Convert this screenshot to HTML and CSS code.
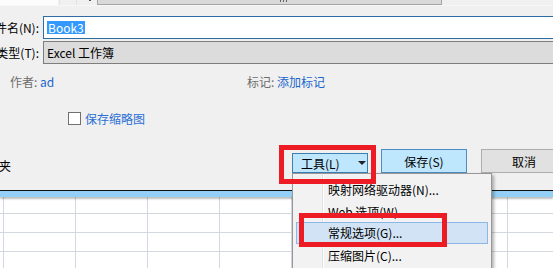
FILE: index.html
```html
<!DOCTYPE html>
<html lang="zh-CN">
<head>
  <meta charset="UTF-8" />
  <title>另存为</title>
  <link rel="stylesheet" href="styles.css">
</head>
<body>
  <div class="dialog">
    <div class="strip">
      <div class="strip-white"></div>
      <div class="strip-btn"></div>
      <div class="strip-btn strip-arrow"><span></span></div>
      <div class="hscroll"><span class="grip"></span></div>
    </div>

    <div class="form">
      <div class="field">
        <span class="label"><span>文件名(N):</span></span>
        <div class="input focused"><span class="selected">Book3</span></div>
      </div>
      <div class="field">
        <span class="label"><span>保存类型(T):</span></span>
        <div class="input combo">Excel 工作簿</div>
      </div>
    </div>

    <div class="meta">
      <div class="meta-item meta-author"><span class="meta-label">作者:</span> <span class="meta-value">ad</span></div>
      <div class="meta-item"><span class="meta-label">标记:</span> <span class="meta-value">添加标记</span></div>
    </div>

    <label class="thumb">
      <span class="checkbox"></span>
      <span class="thumb-text">保存缩略图</span>
    </label>

    <div class="actions">
      <span class="folder"><span>隐藏文件夹</span></span>
      <div class="spacer"></div>
      <button class="btn tools">工具(L)<span class="caret"></span></button>
      <button class="btn save">保存(S)</button>
      <button class="btn cancel">取消</button>
    </div>
  </div>

  <div class="band"></div>
  <div class="sheet"></div>

  <div class="menu">
    <div class="menu-item">映射网络驱动器(N)...</div>
    <div class="menu-item">Web 选项(W)...</div>
    <div class="menu-item active">常规选项(G)...</div>
    <div class="menu-item">压缩图片(C)...</div>
  </div>

  <div class="mark mark-tools"></div>
  <div class="mark mark-option"></div>
</body>
</html>
```

FILE: styles.css
```css
html, body {
  margin: 0;
  padding: 0;
  overflow: hidden;
}

body {
  width: 553px;
  height: 268px;
  position: relative;
  font-family: "Noto Sans CJK SC", "Microsoft YaHei", sans-serif;
  font-size: 12px;
  color: #000;
  background-color: #fff;
}

.dialog {
  width: 580px;
  background-color: #f0f0f0;
  padding-bottom: 17px;
}

/* top strip: the remains of the file list */
.strip {
  display: flex;
  height: 5px;
  border-bottom: 1px solid #f7f7f7;
}

.strip-white {
  width: 58px;
  background-color: #fcfcfc;
}

.strip-btn {
  width: 15px;
  margin-left: 1px;
  background-color: #f0f0f0;
  border-left: 1px solid #e3e3e3;
  position: relative;
}

.strip-arrow span {
  position: absolute;
  left: 12px;
  top: 0;
  width: 2px;
  height: 1px;
  background-color: #555;
}

.hscroll {
  width: 343px;
  margin-left: 5px;
  background-color: #d9d9d9;
  border: 1px solid #a6a6a6;
  border-top: none;
  position: relative;
}

.grip {
  position: absolute;
  left: 182px;
  top: 0;
  width: 7px;
  height: 2px;
  background-image: linear-gradient(to right, #606060 1px, transparent 1px);
  background-size: 3px 2px;
}

.form {
  padding-top: 10px;
  display: flex;
  flex-direction: column;
  gap: 2px;
}

.field {
  display: flex;
  align-items: center;
}

.label {
  width: 39px;
  display: flex;
  justify-content: flex-end;
  overflow: hidden;
  white-space: nowrap;
  margin-right: 4px;
}

.input {
  flex: 1;
  height: 21px;
  box-sizing: content-box;
  display: flex;
  align-items: center;
  padding-left: 3px;
}

.input.focused {
  background-color: #fff;
  border: 1px solid #2e6da4;
}

.selected {
  background-color: #3399ff;
  color: #fff;
  padding: 0 1px;
  line-height: 13px;
}

.input.combo {
  background-color: #dcdcdc;
  border: 1px solid #7e7e7e;
}

.meta {
  display: flex;
  margin-top: 8px;
  padding-left: 10px;
  height: 18px;
  align-items: center;
}

.meta-author {
  width: 237px;
}

.meta-label {
  color: #6d6d6d;
}

.meta-value {
  color: #1a66cc;
}

.thumb {
  display: flex;
  align-items: center;
  gap: 4px;
  margin-top: 19px;
  padding-left: 68px;
  height: 18px;
}

.checkbox {
  width: 11px;
  height: 11px;
  border: 1px solid #707070;
  background-color: #fff;
}

.thumb-text {
  color: #2a6fd4;
}

.actions {
  display: flex;
  align-items: flex-end;
  margin-top: 22px;
  padding-right: 13px;
}

.folder {
  width: 11px;
  display: flex;
  justify-content: flex-end;
  overflow: hidden;
  white-space: nowrap;
  line-height: 14px;
}

.spacer {
  flex: 1;
}

.btn {
  font-family: inherit;
  font-size: 12px;
  color: #000;
  padding: 0;
  height: 24px;
  width: 86px;
  margin-left: 14px;
  border: 1px solid #adadad;
  background-color: #e1e1e1;
}

.btn.tools {
  width: 76px;
  height: 20px;
  margin-left: 0;
  border-color: #3c7fb1;
  background-color: #bee6fd;
  display: flex;
  align-items: center;
  padding-left: 8px;
}

.caret {
  width: 0;
  height: 0;
  margin-left: 18px;
  border-left: 4px solid transparent;
  border-right: 4px solid transparent;
  border-top: 4px solid #222;
}

.btn.save {
  margin-left: 13px;
  border-color: #4f8cc1;
  background-color: #bee6fd;
}

.band {
  height: 6px;
  border-top: 1px solid #111;
  background-color: #93cff7;
  box-shadow: 0 2px 2px rgba(0, 0, 0, 0.25);
  position: relative;
}

.sheet {
  height: 71px;
  background-color: #fff;
  background-image:
    linear-gradient(to right, #d3d8e0 1px, transparent 1px),
    linear-gradient(to bottom, #d3d8e0 1px, transparent 1px);
  background-size: 72px 19px;
  background-position: 3px 16px;
}

/* dropdown of the tools button */
.menu {
  position: absolute;
  left: 292px;
  top: 173px;
  width: 192px;
  height: 90px;
  padding: 4px 3px 0;
  border: 1px solid #979797;
  border-bottom: none;
  background-color: #f2f2f2;
  background-image: linear-gradient(to right, transparent 29px, #e2e2e2 29px, #e2e2e2 30px, #fff 30px, #fff 31px, transparent 31px);
  box-shadow: 2px 2px 3px rgba(0, 0, 0, 0.3);
}

.menu-item {
  height: 22px;
  line-height: 22px;
  padding-left: 31px;
  box-sizing: border-box;
  border: 1px solid transparent;
}

.menu-item.active {
  background-color: #d1e3f5;
  border-color: #8bb8e8;
  line-height: 20px;
}

/* red annotation frames */
.mark {
  position: absolute;
  border: 5px solid #ed1c24;
  box-sizing: border-box;
}

.mark-tools {
  left: 279px;
  top: 145px;
  width: 97px;
  height: 39px;
}

.mark-option {
  left: 299px;
  top: 213px;
  width: 148px;
  height: 34px;
}
```
